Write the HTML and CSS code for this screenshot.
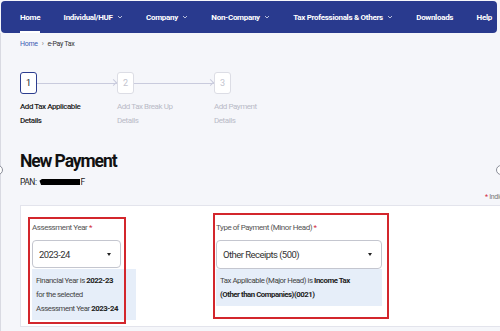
FILE: index.html
```html
<!DOCTYPE html>
<html lang="en">
<head>
<meta charset="utf-8">
<title>e-Pay Tax - New Payment</title>
<link rel="stylesheet" href="styles.css">
</head>
<body>
<nav class="topnav">
  <a class="nav-item active">Home</a>
  <a class="nav-item">Individual/HUF <svg class="chev" viewBox="0 0 6 4"><path d="M1 1l2 2 2-2"/></svg></a>
  <a class="nav-item">Company <svg class="chev" viewBox="0 0 6 4"><path d="M1 1l2 2 2-2"/></svg></a>
  <a class="nav-item">Non-Company <svg class="chev" viewBox="0 0 6 4"><path d="M1 1l2 2 2-2"/></svg></a>
  <a class="nav-item">Tax Professionals &amp; Others <svg class="chev" viewBox="0 0 6 4"><path d="M1 1l2 2 2-2"/></svg></a>
  <a class="nav-item">Downloads</a>
  <a class="nav-item">Help</a>
</nav>
<main class="page">
  <span class="edge-btn edge-left"></span>
  <span class="edge-btn edge-right"></span>
  <div class="crumbs"><a class="crumb-link">Home</a><span class="sep">›</span><span>e-Pay Tax</span></div>
  <ol class="steps">
    <li class="step current">
      <div class="step-head"><span class="step-num">1</span><span class="step-line"></span></div>
      <div class="step-label">Add Tax Applicable<br>Details</div>
    </li>
    <li class="step">
      <div class="step-head"><span class="step-num">2</span><span class="step-line"></span></div>
      <div class="step-label">Add Tax Break Up<br>Details</div>
    </li>
    <li class="step">
      <div class="step-head"><span class="step-num">3</span></div>
      <div class="step-label">Add Payment<br>Details</div>
    </li>
  </ol>
  <h1 class="title">New Payment</h1>
  <div class="pan">PAN: <span class="redact"></span>F</div>
  <div class="mandatory"><span class="req">*</span> Indicates mandatory fields</div>
  <section class="card">
    <div class="field field-ay">
      <label class="field-label">Assessment Year <span class="req">*</span></label>
      <div class="select select-ay"><span>2023-24</span><span class="caret"></span></div>
      <div class="info info-ay">Financial Year is <b>2022-23</b><br>for the selected<br>Assessment Year <b>2023-24</b></div>
    </div>
    <div class="field field-type">
      <label class="field-label">Type of Payment (Minor Head) <span class="req">*</span></label>
      <div class="select select-type"><span>Other Receipts (500)</span><span class="caret"></span></div>
      <div class="info">Tax Applicable (Major Head) is <b>Income Tax</b><br><b>(Other than Companies)(0021)</b></div>
    </div>
    <span class="mark mark-1"></span>
    <span class="mark mark-2"></span>
  </section>
</main>
</body>
</html>
```
FILE: styles.css
```css
* { box-sizing: border-box; }
html, body { margin: 0; padding: 0; }
body {
  width: 500px;
  height: 331px;
  overflow: hidden;
  background: #f5f6fa;
  font-family: "Roboto", "Liberation Sans", sans-serif;
  color: #333;
  letter-spacing: -0.3px;
}

/* top navigation */
.topnav {
  height: 32px;
  margin: 1px 3px 0 1px;
  padding: 0 5px 0 19px;
  background: #293a8e;
  border-radius: 4px;
  display: flex;
  justify-content: space-between;
  align-items: stretch;
}
.nav-item {
  display: flex;
  align-items: center;
  gap: 4px;
  color: #fff;
  font-size: 8px;
  font-weight: 700;
  border-top: 2px solid transparent;
  border-bottom: 2px solid transparent;
  white-space: nowrap;
}
.nav-item.active { border-bottom-color: #fff; }
.chev {
  width: 6px;
  height: 4px;
  fill: none;
  stroke: #c9cfe8;
  stroke-width: 0.9;
}

/* page */
.page {
  position: relative;
  border-left: 1px solid #d9dae2;
  padding-left: 19px;
  height: 298px;
}
.edge-btn {
  position: absolute;
  top: 132px;
  width: 10px;
  height: 10px;
  border: 1px solid #8a8d98;
  border-radius: 50%;
  background: #fff;
}
.edge-left { left: -8px; }
.edge-right { left: 495px; }

.crumbs {
  padding-top: 6px;
  font-size: 7px;
  line-height: 10px;
  display: flex;
  gap: 4px;
  color: #333;
}
.crumb-link { color: #3b5cb4; }
.sep { color: #777; }

/* stepper */
.steps {
  list-style: none;
  margin: 23px 0 0;
  padding: 0;
  display: flex;
}
.step { width: 97px; }
.step-head {
  display: flex;
  align-items: center;
}
.step-num {
  width: 17px;
  height: 22px;
  border: 1px solid #dcdde5;
  border-radius: 3px;
  background: #fff;
  color: #c3c5cf;
  font-size: 9px;
  display: flex;
  align-items: center;
  justify-content: center;
}
.current .step-num {
  border: 1.5px solid #2c3d8f;
  color: #222;
}
.step-line {
  position: relative;
  width: 80px;
  height: 1px;
  background: #c9cbdd;
}
.step-line::after {
  content: "";
  position: absolute;
  right: 1px;
  top: -2.5px;
  width: 4px;
  height: 4px;
  border-top: 1px solid #c9cbdd;
  border-right: 1px solid #c9cbdd;
  transform: rotate(45deg);
}
.step-label {
  margin-top: 6px;
  font-size: 8px;
  line-height: 14px;
  letter-spacing: -0.45px;
  color: #b9bbc7;
}
.current .step-label { color: #222; font-weight: 500; }

/* heading */
.title {
  margin: 22px 0 0;
  font-size: 17.5px;
  line-height: 22px;
  font-weight: 700;
  letter-spacing: -1.1px;
  color: #111;
}
.pan {
  margin-top: 4px;
  font-size: 8.5px;
  line-height: 12px;
  letter-spacing: -0.5px;
  color: #222;
  display: flex;
  align-items: center;
}
.redact {
  display: inline-block;
  width: 41px;
  height: 6px;
  margin-left: 3px;
  background: #000;
  clip-path: polygon(0 30%, 6% 0, 100% 0, 100% 100%, 4% 100%);
}
.mandatory {
  margin: 4px 0 0 465px;
  font-size: 7px;
  line-height: 10px;
  color: #777;
  white-space: nowrap;
}
.req { color: #d0283a; }

/* card */
.card {
  position: relative;
  margin-top: 3px;
  margin-right: -20px;
  background: #fff;
  border: 1px solid #e3e4ec;
  padding: 17px 0 6px 11px;
  display: flex;
  gap: 80px;
  align-items: flex-start;
}
.field-ay { width: 104px; }
.field-type { width: 166px; }
.field-label {
  display: block;
  font-size: 8px;
  line-height: 10px;
  letter-spacing: -0.45px;
  color: #555;
  white-space: nowrap;
}
.select {
  margin-top: 7px;
  height: 28px;
  border: 1px solid #c4c6cf;
  border-radius: 4px;
  background: #fff;
  padding: 0 9px 0 6px;
  display: flex;
  align-items: center;
  justify-content: space-between;
  font-size: 9.5px;
  letter-spacing: -0.55px;
  color: #333;
}
.select-ay { width: 89px; }
.select-type { height: 29px; }
.caret {
  width: 0;
  height: 0;
  border-left: 2px solid transparent;
  border-right: 2px solid transparent;
  border-top: 3px solid #222;
}
.info {
  margin-top: 1px;
  background: #e6eef9;
  padding: 5px 4px 4px;
  font-size: 7.8px;
  line-height: 14px;
  letter-spacing: -0.45px;
  color: #444;
  white-space: nowrap;
}
.info b { color: #222; }
.select-type + .info { margin-top: 0; }

/* annotation rectangles drawn over the form */
.mark {
  position: absolute;
  border: 2px solid #d3262c;
}
.mark-1 { left: 7px; top: 11px; width: 98px; height: 107px; }
.mark-2 { left: 192px; top: 7px; width: 176px; height: 106px; }
```
